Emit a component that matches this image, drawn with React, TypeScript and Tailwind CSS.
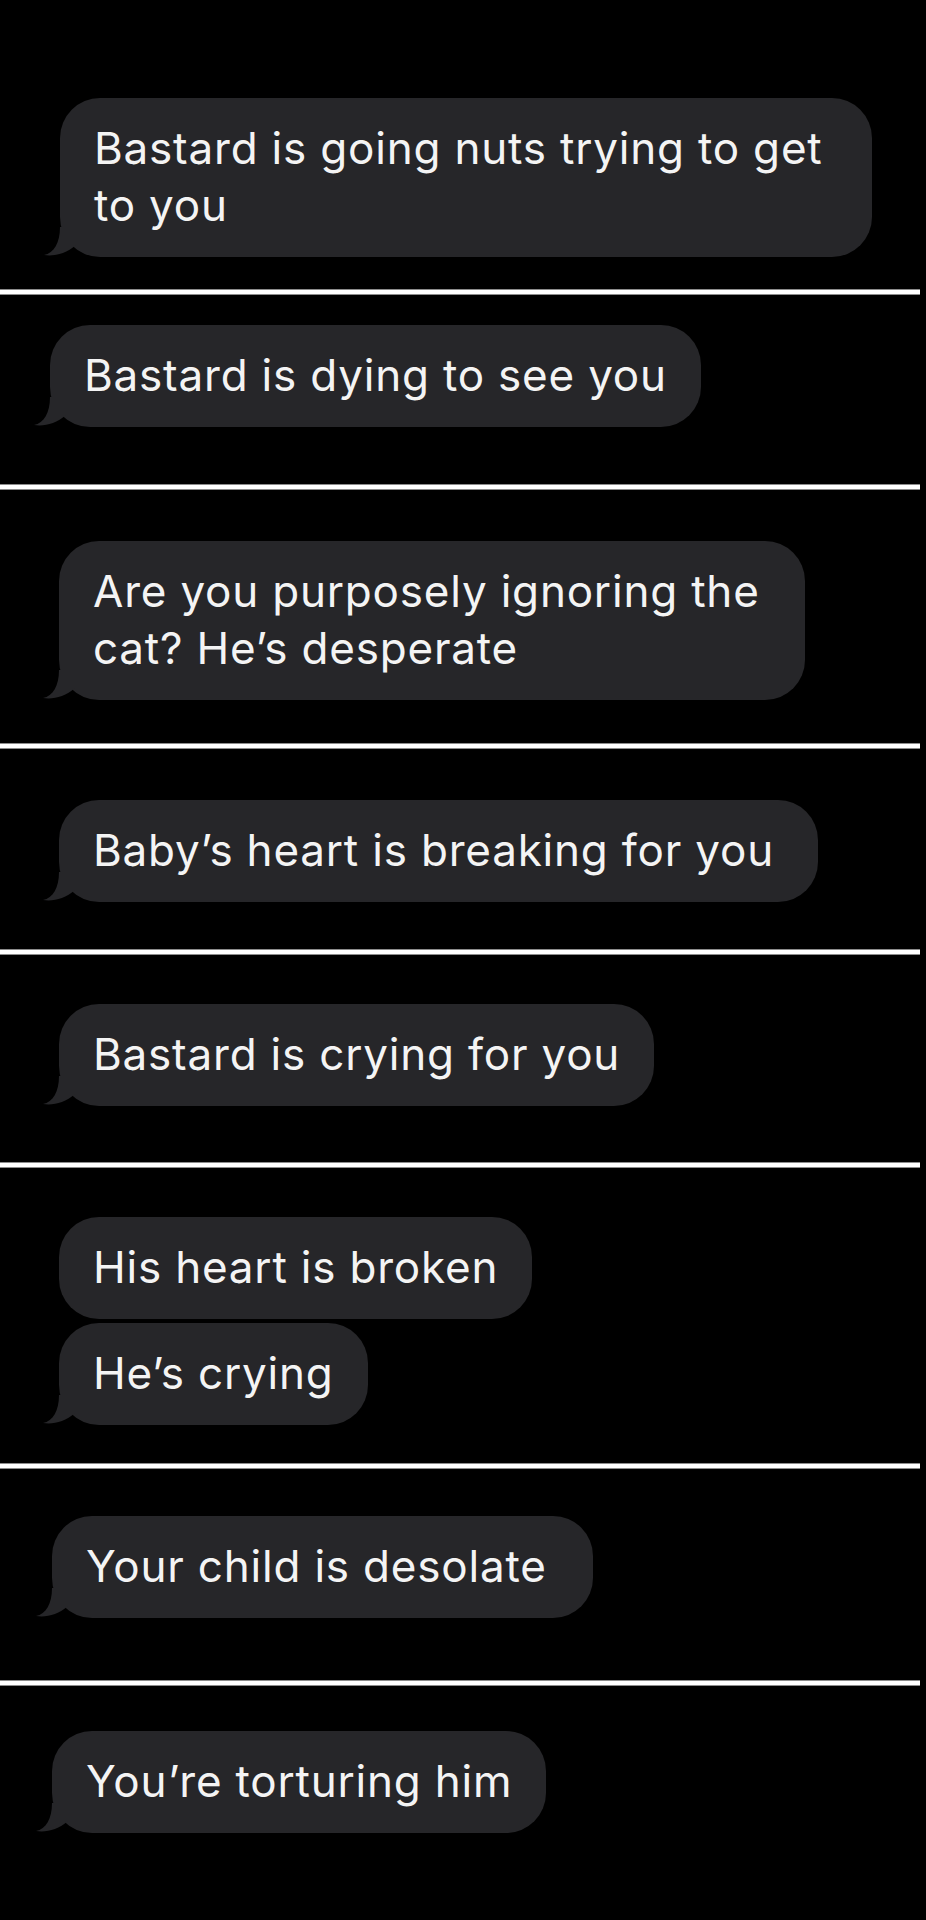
type Bubble = { lines: string[]; tail: boolean; w?: string };
type Section = { pad: string; ml: string; bubbles: Bubble[] };

const sections: Section[] = [
  {
    pad: 'pt-[98px] pb-[32px]',
    ml: 'ml-[60px]',
    bubbles: [{ lines: ['Bastard is going nuts trying to get', 'to you'], tail: true, w: 'w-[812px]' }],
  },
  {
    pad: 'pt-[30px] pb-[57px]',
    ml: 'ml-[50px]',
    bubbles: [{ lines: ['Bastard is dying to see you'], tail: true }],
  },
  {
    pad: 'pt-[51px] pb-[43px]',
    ml: 'ml-[59px]',
    bubbles: [{ lines: ['Are you purposely ignoring the', 'cat? He’s desperate'], tail: true, w: 'w-[746px]' }],
  },
  {
    pad: 'pt-[51px] pb-[47px]',
    ml: 'ml-[59px]',
    bubbles: [{ lines: ['Baby’s heart is breaking for you'], tail: true, w: 'w-[759px]' }],
  },
  {
    pad: 'pt-[49px] pb-[56px]',
    ml: 'ml-[59px]',
    bubbles: [{ lines: ['Bastard is crying for you'], tail: true }],
  },
  {
    pad: 'pt-[49px] pb-[38px]',
    ml: 'ml-[59px]',
    bubbles: [
      { lines: ['His heart is broken'], tail: false },
      { lines: ['He’s crying'], tail: true },
    ],
  },
  {
    pad: 'pt-[47px] pb-[62px]',
    ml: 'ml-[52px]',
    bubbles: [{ lines: ['Your child is desolate'], tail: true, w: 'w-[541px]' }],
  },
  {
    pad: 'pt-[45px] pb-[87px]',
    ml: 'ml-[52px]',
    bubbles: [{ lines: ['You’re torturing him'], tail: true }],
  },
];

const Tail = () => (
  <svg className="absolute left-[-16px] bottom-0" width="36" height="30" viewBox="0 0 36 30">
    <path d="M16 0 C16 16 10 26 0 28 C10 29.5 22 27 32 18 L32 0 Z" fill="#262629" />
  </svg>
);

const MessageBubble = ({ bubble, ml }: { bubble: Bubble; ml: string }) => (
  <div
    className={`relative ${ml} ${bubble.w ?? 'w-fit'} rounded-[40px] bg-[#262629] pl-[34px] pr-[34px] pt-[22px] pb-[23px] text-[44px] leading-[57px] tracking-[0.8px] text-[#f4f4f4]`}
  >
    {bubble.lines.map((line) => (
      <div key={line} className="whitespace-nowrap">
        {line}
      </div>
    ))}
    {bubble.tail && <Tail />}
  </div>
);

const App = () => {
  return (
    <div className="w-[926px] min-h-[1920px] bg-black font-['Inter','Liberation_Sans',sans-serif]">
      {sections.map((section, i) => (
        <div key={i}>
          {i > 0 && <div className="h-[6px] w-[920px] bg-white border-y border-[#8c8c8c]" />}
          <div className={`flex flex-col gap-[4px] ${section.pad}`}>
            {section.bubbles.map((b) => (
              <MessageBubble key={b.lines[0]} bubble={b} ml={section.ml} />
            ))}
          </div>
        </div>
      ))}
    </div>
  );
};

export default App;
